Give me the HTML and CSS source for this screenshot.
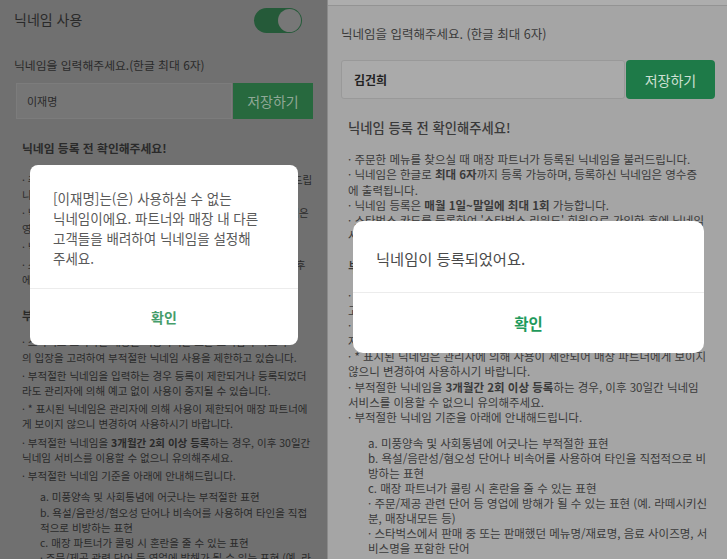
FILE: index.html
```html
<!DOCTYPE html>
<html lang="ko">
<head>
    <meta charset="UTF-8">
    <meta name="viewport" content="width=device-width, initial-scale=1.0">
    <title>닉네임 설정</title>
    <link rel="stylesheet" href="styles.css">
</head>
<body>
    <!-- left: rejected nickname -->
    <section class="screen screen-left">
        <div class="toggle-row">
            <span>닉네임 사용</span>
            <span class="switch"><span class="knob"></span></span>
        </div>

        <div class="form">
            <p class="form-label">닉네임을 입력해주세요.(한글 최대 6자)</p>
            <div class="input-row">
                <div class="input">이재명</div>
                <button class="save">저장하기</button>
            </div>
        </div>

        <div class="notice">
            <h2>닉네임 등록 전 확인해주세요!</h2>
            <ul class="notice-list">
                <li>· 주문한 메뉴를 찾으실 때 매장 파트너가 등록된 닉네임을 불러드립<br>니다.</li>
                <li>· 닉네임은 한글로 <b>최대 6자</b>까지 등록 가능하며, 등록하신 닉네임은<br>영수증에 출력됩니다.</li>
                <li>· 닉네임 등록은 <b>매월 1일~말일에 최대 1회</b> 가능합니다.</li>
                <li>· 스타벅스 카드를 등록하여 '스타벅스 리워드' 회원으로 가입한 후<br>에 닉네임 사용이 가능합니다.</li>
            </ul>
            <h2 class="sub-title">부적절한 닉네임 사용 제한 안내</h2>
            <ul class="notice-list">
                <li>· 스타벅스 코리아는 매장을 이용하시는 모든 고객님과 파트너<br>의 입장을 고려하여 부적절한 닉네임 사용을 제한하고 있습니다.</li>
                <li>· 부적절한 닉네임을 입력하는 경우 등록이 제한되거나 등록되었더<br>라도 관리자에 의해 예고 없이 사용이 중지될 수 있습니다.</li>
                <li>· * 표시된 닉네임은 관리자에 의해 사용이 제한되어 매장 파트너에<br>게 보이지 않으니 변경하여 사용하시기 바랍니다.</li>
                <li>· 부적절한 닉네임을 <b>3개월간 2회 이상 등록</b>하는 경우, 이후 30일간<br>닉네임 서비스를 이용할 수 없으니 유의해주세요.</li>
                <li>· 부적절한 닉네임 기준을 아래에 안내해드립니다.
                    <ul class="rule-list">
                        <li>a. 미풍양속 및 사회통념에 어긋나는 부적절한 표현</li>
                        <li>b. 욕설/음란성/혐오성 단어나 비속어를 사용하여 타인을 직접<br>적으로 비방하는 표현</li>
                        <li>c. 매장 파트너가 콜링 시 혼란을 줄 수 있는 표현</li>
                        <li>· 주문/제공 관련 단어 등 영업에 방해가 될 수 있는 표현 (예. 라<br>떼시키신 분, 매장내모든 등)</li>
                    </ul>
                </li>
            </ul>
        </div>

        <div class="dialog">
            <p class="dialog-msg">[이재명]는(은) 사용하실 수 없는<br>닉네임이에요. 파트너와 매장 내 다른<br>고객들을 배려하여 닉네임을 설정해<br>주세요.</p>
            <div class="dialog-btn">확인</div>
        </div>
    </section>

    <!-- right: registered nickname -->
    <section class="screen screen-right">
        <div class="top-strip"></div>

        <div class="form">
            <p class="form-label">닉네임을 입력해주세요. (한글 최대 6자)</p>
            <div class="input-row">
                <div class="input">김건희</div>
                <button class="save">저장하기</button>
            </div>
        </div>

        <div class="notice">
            <h2>닉네임 등록 전 확인해주세요!</h2>
            <ul class="notice-list">
                <li>· 주문한 메뉴를 찾으실 때 매장 파트너가 등록된 닉네임을 불러드립니다.</li>
                <li>· 닉네임은 한글로 <b>최대 6자</b>까지 등록 가능하며, 등록하신 닉네임은 영수증<br>에 출력됩니다.</li>
                <li>· 닉네임 등록은 <b>매월 1일~말일에 최대 1회</b> 가능합니다.</li>
                <li>· 스타벅스 카드를 등록하여 '스타벅스 리워드' 회원으로 가입한 후에 닉네임<br>사용이 가능합니다.</li>
            </ul>
            <h2 class="sub-title">부적절한 닉네임 사용 제한 안내</h2>
            <ul class="notice-list">
                <li>· 스타벅스 코리아는 매장을 이용하시는 모든 고객님과 파트너의 입장을<br>고려하여 부적절한 닉네임 사용을 제한하고 있습니다.</li>
                <li>· 부적절한 닉네임을 입력하는 경우 등록이 제한되거나 등록되었더라도 관리<br>자에 의해 예고 없이 사용이 중지될 수 있습니다.</li>
                <li>· * 표시된 닉네임은 관리자에 의해 사용이 제한되어 매장 파트너에게 보이지<br>않으니 변경하여 사용하시기 바랍니다.</li>
                <li>· 부적절한 닉네임을 <b>3개월간 2회 이상 등록</b>하는 경우, 이후 30일간 닉네임<br>서비스를 이용할 수 없으니 유의해주세요.</li>
                <li>· 부적절한 닉네임 기준을 아래에 안내해드립니다.
                    <ul class="rule-list">
                        <li>a. 미풍양속 및 사회통념에 어긋나는 부적절한 표현</li>
                        <li>b. 욕설/음란성/혐오성 단어나 비속어를 사용하여 타인을 직접적으로 비<br>방하는 표현</li>
                        <li>c. 매장 파트너가 콜링 시 혼란을 줄 수 있는 표현</li>
                        <li>· 주문/제공 관련 단어 등 영업에 방해가 될 수 있는 표현 (예. 라떼시키신<br>분, 매장내모든 등)</li>
                        <li>· 스타벅스에서 판매 중 또는 판매했던 메뉴명/재료명, 음료 사이즈명, 서<br>비스명을 포함한 단어</li>
                    </ul>
                </li>
            </ul>
        </div>

        <div class="dialog">
            <p class="dialog-msg">닉네임이 등록되었어요.</p>
            <div class="dialog-btn">확인</div>
        </div>
    </section>
</body>
</html>
```

FILE: styles.css
```css
* {
    margin: 0;
    padding: 0;
    box-sizing: border-box;
}

body {
    font-family: "Noto Sans CJK KR", "Noto Sans", sans-serif;
    width: 727px;
    height: 559px;
    overflow: hidden;
    display: flex;
}

ul {
    list-style: none;
}

b {
    font-weight: 700;
}

.screen {
    position: relative;
    height: 559px;
    overflow: hidden;
    white-space: nowrap;
}

.input-row {
    display: flex;
}

.input {
    flex: 1;
    display: flex;
    align-items: center;
}

.save {
    border: none;
    font-family: inherit;
}

.dialog {
    position: absolute;
    background: #fff;
    display: flex;
    flex-direction: column;
}

.dialog-btn {
    flex: 1;
    display: flex;
    align-items: center;
    justify-content: center;
    font-weight: 700;
}

/* ---------- left screen ---------- */

.screen-left {
    width: 327px;
    background: #707070;
    color: #2a2a2a;
}

.toggle-row {
    height: 38px;
    display: flex;
    align-items: center;
    justify-content: space-between;
    padding: 0 25px 0 14px;
    font-size: 14px;
}

.switch {
    width: 48px;
    height: 25px;
    margin-top: 3px;
    border-radius: 13px;
    background: #255a39;
    padding: 1px;
    display: flex;
    justify-content: flex-end;
}

.knob {
    width: 23px;
    height: 23px;
    border-radius: 50%;
    background: #777;
}

.screen-left .form {
    padding: 19px 0 0 14px;
}

.screen-left .form-label {
    font-size: 11.8px;
    line-height: 16px;
}

.screen-left .input-row {
    margin: 10px 0 0 2px;
    width: 297px;
    height: 36px;
    gap: 1px;
}

.screen-left .input {
    background: #767676;
    border: 1px solid #7c7c7c;
    padding-left: 10px;
    font-size: 11px;
}

.screen-left .save {
    width: 80px;
    background: #27693e;
    color: #8fa896;
    font-size: 14px;
}

.screen-left .notice {
    padding: 21px 0 0 22px;
    font-size: 10.5px;
}

.screen-left h2 {
    font-size: 11.8px;
    line-height: 16px;
    font-weight: 700;
}

.screen-left .sub-title {
    margin-top: 20px;
}

.screen-left .notice-list {
    margin-top: 16px;
}

.screen-left .sub-title + .notice-list {
    margin-top: 11px;
}

.screen-left .notice-list > li {
    line-height: 15.2px;
    margin-bottom: 3px;
}

.screen-left .rule-list {
    margin-top: 6px;
    padding-left: 18px;
}

.screen-left .rule-list li {
    line-height: 15.3px;
}

.screen-left .dialog {
    left: 30px;
    top: 165px;
    width: 268px;
    height: 180px;
    border-radius: 8px;
}

.screen-left .dialog-msg {
    padding: 23px 23px 20px;
    font-size: 13.5px;
    line-height: 20px;
    color: #595959;
    border-bottom: 1px solid #ececec;
}

.screen-left .dialog-btn {
    font-size: 14px;
    color: #469d6b;
}

/* ---------- right screen ---------- */

.screen-right {
    width: 400px;
    background: #a5a5a5;
    color: #3a3a3a;
    border-left: 1px solid #8a8a8a;
}

.top-strip {
    height: 6px;
    background: #adadad;
    border-bottom: 1px solid #939393;
}

.screen-right .form {
    padding: 20px 0 0 13px;
}

.screen-right .form-label {
    font-size: 12.5px;
    line-height: 16px;
}

.screen-right .input-row {
    margin-top: 18px;
    width: 374px;
    height: 39px;
    gap: 1px;
}

.screen-right .input {
    background: #aaa;
    border: 1px solid #999;
    border-radius: 3px;
    padding-left: 12px;
    font-size: 12px;
    font-weight: 700;
    color: #222;
}

.screen-right .save {
    width: 89px;
    border-radius: 4px;
    background: #1e7a48;
    color: #cfe0d4;
    font-size: 14px;
}

.screen-right .notice {
    padding: 20px 0 0 20px;
    font-size: 11.5px;
}

.screen-right h2 {
    font-size: 13.3px;
    line-height: 18px;
    font-weight: 500;
}

.screen-right .sub-title {
    margin-top: 14px;
}

.screen-right .notice-list {
    margin-top: 15px;
}

.screen-right .sub-title + .notice-list {
    margin-top: 12px;
}

.screen-right .notice-list > li {
    line-height: 15.3px;
}

.screen-right .rule-list {
    margin-top: 11px;
    padding-left: 20px;
}

.screen-right .rule-list li {
    line-height: 15px;
}

.screen-right .dialog {
    left: 25px;
    top: 221px;
    width: 351px;
    height: 132px;
    border-radius: 10px;
}

.screen-right .dialog-msg {
    padding: 27px 23px 24px;
    font-size: 15.3px;
    line-height: 20px;
    color: #4a4a4a;
    border-bottom: 1px solid #ececec;
}

.screen-right .dialog-btn {
    font-size: 15.5px;
    color: #1f9a5c;
}
```
